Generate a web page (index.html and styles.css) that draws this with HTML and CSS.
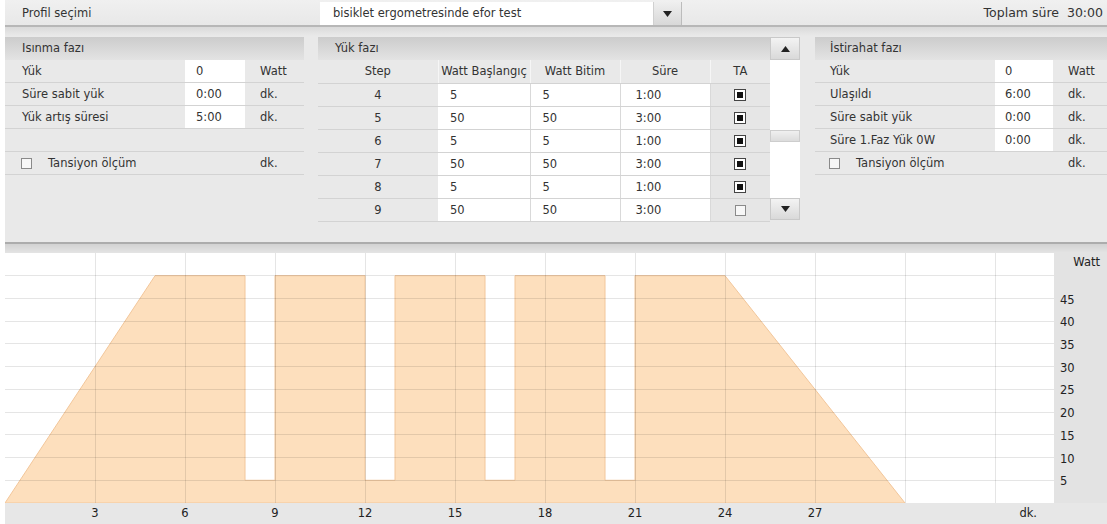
FILE: index.html
```html
<!DOCTYPE html>
<html lang="tr">
<head>
<meta charset="utf-8">
<title>Efor test profili</title>
<link rel="stylesheet" href="styles.css">
</head>
<body>
<div class="app">
  <header class="topbar">
    <div class="profile-label">Profil seçimi</div>
    <div class="select">
      <span class="select-text">bisiklet ergometresinde efor test</span>
      <span class="select-btn"><svg width="9" height="6" viewBox="0 0 9 6"><polygon points="0,0 9,0 4.5,6" fill="#222"/></svg></span>
    </div>
    <div class="total"><span>Toplam süre</span><span class="total-value">30:00</span></div>
  </header>

  <div class="phases">
    <section class="phase phase-warm">
      <div class="phase-head">Isınma fazı</div>
      <div class="frow"><span class="flabel">Yük</span><span class="fval filled">0</span><span class="funit">Watt</span></div>
      <div class="frow"><span class="flabel">Süre sabit yük</span><span class="fval filled">0:00</span><span class="funit">dk.</span></div>
      <div class="frow"><span class="flabel">Yük artış süresi</span><span class="fval filled">5:00</span><span class="funit">dk.</span></div>
      <div class="frow"><span class="flabel"></span><span class="fval"></span><span class="funit"></span></div>
      <div class="frow"><span class="flabel check-label"><span class="cbox"></span>Tansiyon ölçüm</span><span class="fval"></span><span class="funit">dk.</span></div>
    </section>

    <section class="phase phase-load">
      <div class="load-head">
        <div class="phase-head">Yük fazı</div>
        <span class="scroll-btn"><svg width="9" height="6" viewBox="0 0 9 6"><polygon points="0,6 9,6 4.5,0" fill="#222"/></svg></span>
      </div>
      <div class="load-body">
        <table class="steps">
          <colgroup><col class="c-step"><col class="c-num"><col class="c-num2"><col class="c-num2"><col class="c-ta"></colgroup>
          <thead>
            <tr><th>Step</th><th>Watt Başlangıç</th><th>Watt Bitim</th><th>Süre</th><th>TA</th></tr>
          </thead>
          <tbody>
            <tr><td class="step">4</td><td class="val">5</td><td class="val">5</td><td class="val dur">1:00</td><td class="ta"><span class="cbox on"></span></td></tr>
            <tr><td class="step">5</td><td class="val">50</td><td class="val">50</td><td class="val dur">3:00</td><td class="ta"><span class="cbox on"></span></td></tr>
            <tr><td class="step">6</td><td class="val">5</td><td class="val">5</td><td class="val dur">1:00</td><td class="ta"><span class="cbox on"></span></td></tr>
            <tr><td class="step">7</td><td class="val">50</td><td class="val">50</td><td class="val dur">3:00</td><td class="ta"><span class="cbox on"></span></td></tr>
            <tr><td class="step">8</td><td class="val">5</td><td class="val">5</td><td class="val dur">1:00</td><td class="ta"><span class="cbox on"></span></td></tr>
            <tr><td class="step">9</td><td class="val">50</td><td class="val">50</td><td class="val dur">3:00</td><td class="ta"><span class="cbox"></span></td></tr>
          </tbody>
        </table>
        <div class="scrollbar">
          <div class="track"><div class="thumb"></div></div>
          <span class="scroll-btn down"><svg width="9" height="6" viewBox="0 0 9 6"><polygon points="0,0 9,0 4.5,6" fill="#222"/></svg></span>
        </div>
      </div>
    </section>

    <section class="phase phase-rest">
      <div class="phase-head">İstirahat fazı</div>
      <div class="frow"><span class="flabel">Yük</span><span class="fval filled">0</span><span class="funit">Watt</span></div>
      <div class="frow"><span class="flabel">Ulaşıldı</span><span class="fval filled">6:00</span><span class="funit">dk.</span></div>
      <div class="frow"><span class="flabel">Süre sabit yük</span><span class="fval filled">0:00</span><span class="funit">dk.</span></div>
      <div class="frow"><span class="flabel">Süre 1.Faz Yük 0W</span><span class="fval filled">0:00</span><span class="funit">dk.</span></div>
      <div class="frow"><span class="flabel check-label"><span class="cbox"></span>Tansiyon ölçüm</span><span class="fval"></span><span class="funit">dk.</span></div>
    </section>
  </div>

  <div class="divider"></div>

  <div class="chart">
    <div class="chart-main">
      <!-- 30 px per minute, 50/11 px per watt (0-55 W) -->
      <svg class="plot" width="1049" height="250" viewBox="0 0 1049 250" shape-rendering="crispEdges">
        <rect x="0" y="0" width="1049" height="250" fill="#fff"/>
        <polygon class="load" shape-rendering="auto"
          points="0,250 150,22.73 240,22.73 240,227.27 270,227.27 270,22.73 360,22.73 360,227.27 390,227.27 390,22.73 480,22.73 480,227.27 510,227.27 510,22.73 600,22.73 600,227.27 630,227.27 630,22.73 720,22.73 900,250"/>
        <g class="grid">
          <line x1="0" x2="1049" y1="227.5" y2="227.5"/>
          <line x1="0" x2="1049" y1="204.5" y2="204.5"/>
          <line x1="0" x2="1049" y1="181.5" y2="181.5"/>
          <line x1="0" x2="1049" y1="159.5" y2="159.5"/>
          <line x1="0" x2="1049" y1="136.5" y2="136.5"/>
          <line x1="0" x2="1049" y1="113.5" y2="113.5"/>
          <line x1="0" x2="1049" y1="90.5" y2="90.5"/>
          <line x1="0" x2="1049" y1="68.5" y2="68.5"/>
          <line x1="0" x2="1049" y1="45.5" y2="45.5"/>
          <line x1="0" x2="1049" y1="22.5" y2="22.5"/>
          <line y1="0" y2="250" x1="90.5" x2="90.5"/>
          <line y1="0" y2="250" x1="180.5" x2="180.5"/>
          <line y1="0" y2="250" x1="270.5" x2="270.5"/>
          <line y1="0" y2="250" x1="360.5" x2="360.5"/>
          <line y1="0" y2="250" x1="450.5" x2="450.5"/>
          <line y1="0" y2="250" x1="540.5" x2="540.5"/>
          <line y1="0" y2="250" x1="630.5" x2="630.5"/>
          <line y1="0" y2="250" x1="720.5" x2="720.5"/>
          <line y1="0" y2="250" x1="810.5" x2="810.5"/>
          <line y1="0" y2="250" x1="900.5" x2="900.5"/>
          <line y1="0" y2="250" x1="990.5" x2="990.5"/>
        </g>
      </svg>
      <div class="yaxis">
        <span class="yunit">Watt</span>
        <span>45</span><span>40</span><span>35</span><span>30</span><span>25</span><span>20</span><span>15</span><span>10</span><span>5</span>
      </div>
    </div>
    <div class="xaxis">
      <span>3</span><span>6</span><span>9</span><span>12</span><span>15</span><span>18</span><span>21</span><span>24</span><span>27</span>
      <span class="xunit">dk.</span>
    </div>
  </div>
</div>
</body>
</html>
```

FILE: styles.css
```css
body {
  margin: 0;
  background: #fff;
  font-family: "DejaVu Sans", Verdana, sans-serif;
  font-size: 11.5px;
  color: #333;
}

.app {
  margin-left: 5px;
  width: 1102px;
  height: 524px;
  background: #e9e9e9;
  display: flex;
  flex-direction: column;
  overflow: hidden;
}

/* ---- top bar ---- */
.topbar {
  height: 27px;
  box-sizing: border-box;
  display: flex;
  background: linear-gradient(#f0f0f0, #e8e8e8);
  border-bottom: 2px solid #b7b7b7;
}

.profile-label {
  width: 315px;
  padding-left: 17px;
  box-sizing: border-box;
  line-height: 26px;
}

.select {
  display: flex;
  margin-top: 2px;
  height: 23px;
}

.select-text {
  width: 333px;
  padding-left: 13px;
  box-sizing: border-box;
  background: #fff;
  line-height: 23px;
}

.select-btn {
  width: 27px;
  display: flex;
  align-items: center;
  justify-content: center;
  background: linear-gradient(#efefef, #d8d8d8);
  border-left: 1px solid #d0d0d0;
  border-right: 1px solid #bcbcbc;
}

.total {
  margin-left: auto;
  padding-right: 4px;
  line-height: 26px;
  font-size: 12.5px;
}

.total-value {
  margin-left: 8px;
}

/* ---- phase panels ---- */
.phases {
  height: 215px;
  box-sizing: border-box;
  padding-top: 10px;
  display: flex;
  background: linear-gradient(#dadada, #e9e9e9 9px);
}

.phase-warm { width: 299px; }
.phase-load { width: 482px; margin-left: 14px; }
.phase-rest { width: 292px; margin-left: 15px; }

.phase-head {
  height: 23px;
  line-height: 23px;
  padding-left: 17px;
  background: linear-gradient(#cccccc, #e3e3e3);
}

.phase-rest .phase-head { padding-left: 15px; }

.frow {
  display: grid;
  grid-template-columns: 180px 60px 1fr;
  height: 23px;
  box-sizing: border-box;
  border-bottom: 1px solid #d3d3d3;
  line-height: 22px;
}

.phase-rest .frow { grid-template-columns: 180px 58px 1fr; }

.flabel { padding-left: 17px; }
.phase-rest .flabel { padding-left: 15px; }

.fval { padding-left: 11px; }
.phase-rest .fval { padding-left: 10px; }
.fval.filled { background: #fff; }

.funit { padding-left: 15px; }

.check-label {
  display: flex;
  align-items: center;
  gap: 16px;
}

.check-label .cbox { margin-left: -1px; }

.cbox {
  display: inline-block;
  width: 11px;
  height: 11px;
  box-sizing: border-box;
  border: 1px solid #8a8a8a;
  background: #f7f7f7;
}

.cbox.on {
  width: 12px;
  height: 12px;
  border-color: #444;
  background: #fff;
  padding: 2px;
}

.cbox.on::after {
  content: "";
  display: block;
  width: 100%;
  height: 100%;
  background: #111;
}

/* ---- load phase table ---- */
.load-head { display: flex; }
.load-head .phase-head { flex: 1; }

.scroll-btn {
  width: 30px;
  height: 23px;
  box-sizing: border-box;
  display: flex;
  align-items: center;
  justify-content: center;
  background: linear-gradient(#f3f3f3, #d9d9d9);
  border: 1px solid #c9c9c9;
}

.load-body { display: flex; }

.steps {
  width: 452px;
  table-layout: fixed;
  border-collapse: collapse;
}

.c-step { width: 120px; }
.c-num { width: 92px; }
.c-num2 { width: 90px; }
.c-ta { width: 60px; }

.steps th,
.steps td {
  height: 23px;
  padding: 0;
  box-sizing: border-box;
  border-bottom: 1px solid #d3d3d3;
  white-space: nowrap;
}

.steps th {
  font-weight: normal;
  text-align: center;
  border-right: 1px solid #f6f6f6;
}

.steps th:last-child { border-right: none; }

.steps td.step { text-align: center; }

.steps td.val {
  background: #fff;
  padding-left: 12px;
  border-right: 1px solid #d9d9d9;
}

.steps td.dur { padding-left: 15px; }

.steps td.ta {
  text-align: center;
  background: #e6e6e6;
}

.steps td.ta .cbox { vertical-align: middle; }

.scrollbar {
  width: 30px;
  display: flex;
  flex-direction: column;
}

.track {
  height: 138px;
  box-sizing: border-box;
  padding-top: 70px;
  background: #fff;
}

.thumb {
  height: 12px;
  box-sizing: border-box;
  background: linear-gradient(#f0f0f0, #dcdcdc);
  border: 1px solid #cdcdcd;
}

.scroll-btn.down { height: 22px; }

/* ---- separator ---- */
.divider {
  height: 11px;
  box-sizing: border-box;
  border-top: 2px solid #acacac;
  background: linear-gradient(#d2d2d2, #e4e4e4);
}

/* ---- chart ---- */
.chart-main {
  display: flex;
  height: 250px;
}

.plot { display: block; }

.plot .load {
  fill: #fddfbd;
  stroke: #f2c69a;
  stroke-width: 1;
}

.plot .grid line {
  stroke: rgba(0, 0, 0, 0.1);
  stroke-width: 1;
}

.yaxis {
  width: 53px;
  background: #e3e3e3;
  display: grid;
  grid-template-rows: 35.5px repeat(9, 22.727px);
  color: #222;
}

.yaxis span {
  padding-left: 6px;
  line-height: 22.727px;
}

.yaxis .yunit {
  text-align: right;
  padding: 0 7px 0 0;
  line-height: 18px;
}

.xaxis {
  height: 21px;
  display: flex;
  padding-left: 45px;
  background: #e7e7e7;
  color: #222;
  line-height: 21px;
}

.xaxis span {
  width: 90px;
  text-align: center;
}

.xaxis .xunit {
  width: auto;
  margin-left: auto;
  margin-right: 70px;
}
```
